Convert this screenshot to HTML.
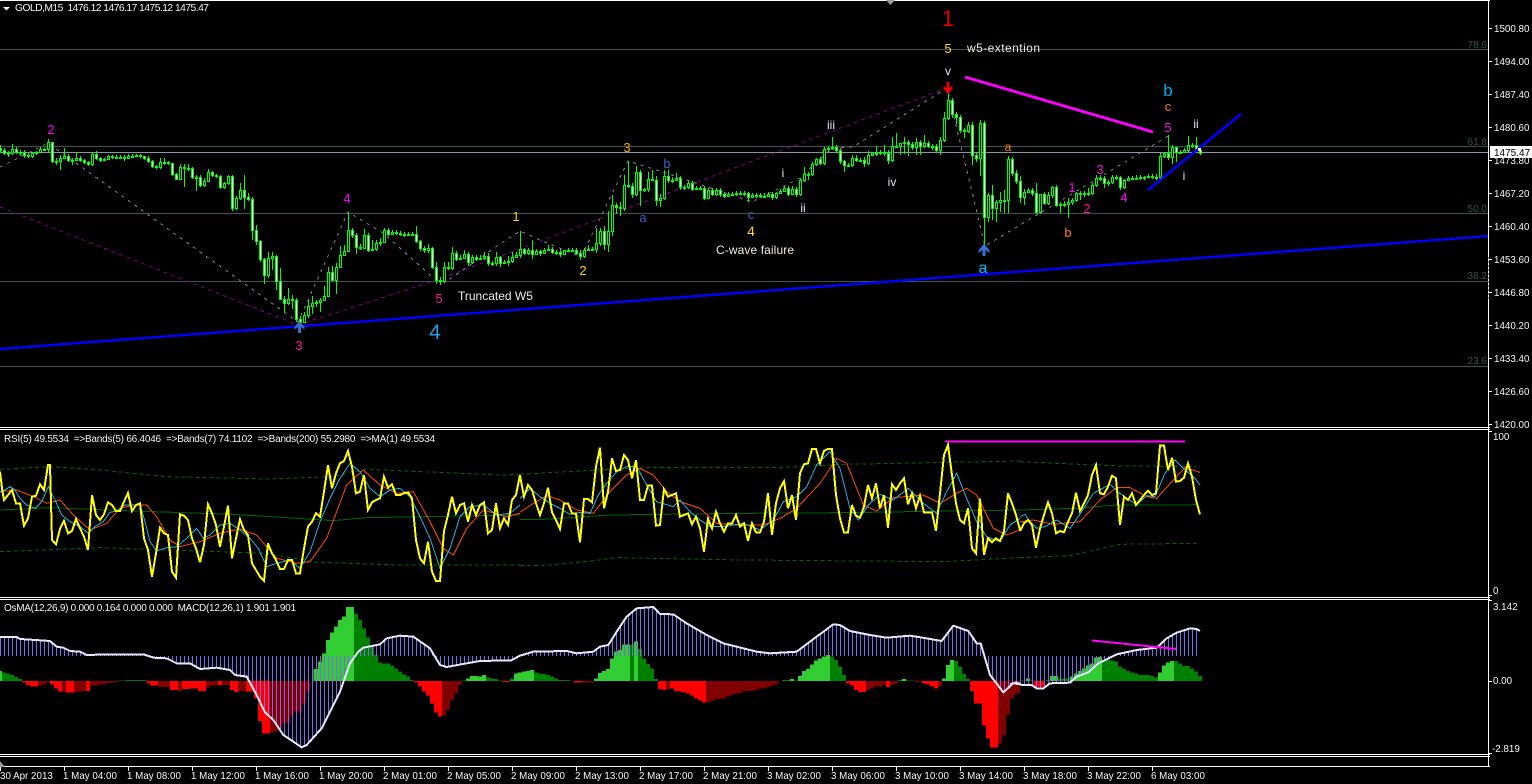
<!DOCTYPE html>
<html><head><meta charset="utf-8"><title>GOLD,M15</title>
<style>
html,body{margin:0;padding:0;background:#000;width:1532px;height:784px;overflow:hidden}
svg{display:block;position:absolute;left:0;top:0}
text{font-family:"Liberation Sans",sans-serif;white-space:pre}
.ax{fill:#f6f6f6;font-size:9.8px}
.fib{fill:#38504c;font-size:10px;text-anchor:end}
.lb{fill:#f3ebdc;font-size:12px}
.c{text-anchor:middle;font-size:12px}
.sh polyline,.sh line,.sh path{shape-rendering:crispEdges}
</style></head><body>
<svg width="1532" height="784" viewBox="0 0 1532 784" xmlns="http://www.w3.org/2000/svg">
<defs>
<pattern id="p0" patternUnits="userSpaceOnUse" x="0" y="0" width="12" height="12"><rect width="3" height="12" fill="#7B68EE"/></pattern>
<pattern id="p1" patternUnits="userSpaceOnUse" x="6" y="0" width="12" height="12"><rect width="3" height="12" fill="#7B68EE"/></pattern>
</defs>
<g class="sh" fill="none">
<g stroke="#3d5652" stroke-width="1">
<line x1="0" x2="1489" y1="49.5" y2="49.5"/><line x1="0" x2="1489" y1="146.5" y2="146.5"/><line x1="0" x2="1489" y1="213.5" y2="213.5"/><line x1="0" x2="1489" y1="281.5" y2="281.5"/><line x1="0" x2="1489" y1="366.5" y2="366.5"/>
</g>
<line x1="0" x2="1489" y1="152.5" y2="152.5" stroke="#8797a8"/>
<polyline stroke="#80858f" stroke-dasharray="3 5" points="0,167 48,143 298,322 348,212 383,233 437,281 447,281 500,244 520,231 540,240 581,257 628,161 666,173 752,202 800,178 832,148 853,147 947,88 985,246 1040,213 1170,135"/>
<polyline stroke="#800080" stroke-dasharray="4 4" points="0,207 298,325 437,280 947,88"/>
</g>
<!-- candles -->
<g transform="translate(.5,0)" fill="none" shape-rendering="crispEdges">
<path stroke="#00ff00" stroke-width="1" d="M0 145V153M4 148V155M8 151V157M12 144V155M16 147V154M20 150V156M24 150V158M28 153V158M32 152V158M36 151V155M40 147V153M44 148V151M48 139V152M52 142V163M56 158V165M60 155V170M64 148V158M68 154V162M72 158V165M76 153V161M80 156V162M84 159V164M88 161V166M92 152V166M96 151V160M100 157V162M104 158V161M108 155V160M112 155V159M116 155V158M120 155V159M124 155V161M128 154V159M132 154V157M136 154V157M140 154V158M144 156V160M148 156V163M152 160V168M156 165V169M160 158V169M164 158V165M168 161V165M172 163V176M176 173V180M180 164V180M184 164V187M188 164V171M192 167V179M196 175V191M200 175V187M204 178V187M208 169V175M212 171V177M216 174V178M220 175V189M224 182V189M228 175V185M232 175V211M236 196V210M240 183V200M244 175V209M248 193V201M252 197V240M256 225V245M260 240V262M264 258V284M268 252V278M272 252V270M276 255V290M280 268V300M284 296V313M288 288V305M292 295V309M296 298V322M300 316V325M304 312V323M308 300V318M312 296V314M316 300V307M320 298V312M324 286V300M328 267V296M332 266V281M336 263V294M340 246V268M344 245V256M348 212V252M352 228V238M356 233V254M360 244V250M364 229V249M368 233V252M372 240V251M376 240V251M380 238V246M384 228V243M388 228V236M392 230V235M396 230V235M400 231V236M404 232V237M408 232V236M412 232V236M416 226V243M420 240V251M424 246V253M428 244V253M432 247V269M436 262V284M440 277V285M444 262V283M448 262V270M452 247V270M456 251V261M460 255V260M464 250V259M468 252V266M472 255V264M476 255V261M480 255V260M484 252V260M488 253V266M492 261V266M496 252V266M500 256V267M504 260V264M508 256V266M512 252V263M516 252V257M520 231V258M524 248V255M528 248V255M532 240V259M536 249V255M540 250V256M544 248V252M548 245V251M552 247V254M556 250V255M560 249V257M564 250V255M568 248V252M572 248V252M576 248V255M580 250V260M584 248V258M588 245V251M592 247V251M596 228V253M600 228V246M604 226V250M608 211V252M612 195V236M616 203V214M620 202V216M624 175V211M628 161V188M632 183V198M636 166V196M640 170V206M644 188V192M648 172V192M652 170V181M656 176V206M660 194V207M664 170V200M668 170V183M672 177V183M676 173V180M680 176V190M684 185V190M688 180V189M692 181V191M696 186V190M700 186V190M704 186V200M708 188V199M712 188V196M716 188V196M720 188V197M724 192V198M728 192V197M732 192V196M736 191V196M740 191V195M744 191V196M748 192V202M752 193V198M756 193V198M760 193V198M764 193V198M768 192V197M772 192V200M776 192V199M780 189V193M784 186V191M788 186V196M792 186V195M796 187V197M800 178V196M804 167V182M808 172V180M812 162V176M816 158V166M820 157V165M824 147V165M828 146V152M832 137V150M836 145V153M840 148V164M844 160V172M848 163V167M852 155V167M856 155V162M860 158V162M864 157V167M868 151V165M872 152V156M876 146V156M880 150V155M884 145V156M888 150V164M892 137V162M896 133V148M900 144V155M904 137V154M908 140V156M912 142V150M916 138V155M920 140V155M924 135V148M928 141V148M932 144V150M936 144V152M940 137V155M944 112V142M948 90V120M952 98V118M956 112V124M960 115V133M964 128V138M968 122V133M972 122V165M976 153V162M980 120V176M984 121V245M988 193V222M992 185V220M996 200V222M1000 192V212M1004 190V213M1008 156V213M1012 157V176M1016 170V184M1020 176V203M1024 189V205M1028 188V193M1032 188V196M1036 183V214M1040 197V214M1044 192V205M1048 192V205M1052 186V198M1056 185V207M1060 202V213M1064 201V207M1068 198V218M1072 198V205M1076 192V202M1080 191V200M1084 191V197M1088 188V196M1092 183V195M1096 175V187M1100 175V181M1104 176V188M1108 180V186M1112 175V184M1116 175V180M1120 176V190M1124 179V189M1128 176V181M1132 176V180M1136 175V180M1140 175V180M1144 176V180M1148 174V178M1152 174V179M1156 174V180M1160 153V179M1164 152V158M1168 135V160M1172 145V164M1176 150V162M1180 150V154M1184 148V152M1188 136V152M1192 143V148M1196 137V152M1200 148V155"/>
<path stroke="#00ff00" stroke-width="3" d="M0 148V151M4 150V154M8 153V155M12 149V154M16 149V153M20 152V154M24 152V156M28 155V157M32 153V157M36 152V154M40 149V153M44 149V151M48 142V150M52 142V162M56 161V163M60 158V162M64 156V159M68 156V161M72 160V162M76 158V161M80 158V161M84 160V163M88 162V165M92 154V165M96 154V159M100 158V161M104 159V161M108 156V160M112 156V158M116 157V159M120 157V159M124 157V159M128 156V159M132 156V158M136 155V157M140 155V157M144 156V159M148 158V162M152 161V167M156 166V168M160 162V168M164 162V164M168 162V164M172 163V175M176 174V180M180 167V180M184 167V169M188 168V170M192 168V178M196 177V179M200 177V186M204 181V186M208 172V182M212 172V176M216 175V177M220 176V188M224 183V188M228 176V184M232 176V209M236 198V209M240 190V199M244 190V198M248 197V200M252 199V231M256 230V242M260 241V260M264 259V276M268 258V276M272 256V259M276 256V282M280 281V300M284 299V304M288 299V304M292 299V301M296 300V320M300 319V323M304 315V323M308 306V316M312 303V307M316 302V304M320 300V303M324 296V301M328 272V297M332 272V281M336 267V281M340 255V268M344 251V256M348 230V252M352 230V236M356 235V248M360 247V249M364 235V249M368 235V251M372 249V251M376 243V250M380 242V244M384 230V243M388 230V235M392 232V235M396 232V234M400 233V235M404 234V236M408 234V236M412 234V236M416 234V242M420 241V249M424 248V251M428 248V251M432 248V268M436 267V281M440 280V282M444 267V282M448 267V269M452 253V269M456 253V260M460 258V260M464 254V259M468 254V263M472 257V263M476 257V260M480 258V260M484 256V259M488 256V264M492 263V265M496 257V264M500 257V264M504 262V264M508 261V263M512 257V262M516 255V258M520 249V256M524 249V254M528 250V254M532 250V255M536 251V255M540 251V254M544 250V254M548 249V251M552 249V253M556 252V254M560 252V255M564 250V255M568 250V252M572 250V252M576 250V254M580 253V257M584 250V257M588 249V251M592 249V251M596 243V250M600 231V244M604 231V245M608 231V245M612 205V232M616 205V208M620 207V209M624 185V209M628 185V187M632 186V195M636 172V195M640 172V191M644 189V191M648 179V190M652 179V181M656 180V201M660 198V201M664 176V199M668 176V181M672 180V182M676 178V181M680 178V188M684 187V189M688 183V188M692 183V190M696 188V190M700 188V190M704 188V199M708 190V199M712 190V195M716 190V195M720 190V195M724 194V197M728 194V197M732 194V196M736 193V195M740 193V195M744 193V195M748 193V198M752 195V198M756 195V197M760 195V197M764 196V198M768 194V197M772 194V198M776 193V198M780 191V194M784 188V192M788 188V195M792 189V195M796 189V195M800 180V195M804 174V181M808 174V176M812 164V175M816 159V165M820 159V164M824 149V164M828 148V150M832 147V149M836 147V151M840 150V162M844 161V166M848 165V167M852 158V166M856 158V161M860 160V162M864 160V164M868 155V164M872 153V156M876 153V155M880 152V154M884 152V154M888 153V161M892 146V161M896 146V148M900 143V147M904 142V144M908 142V145M912 144V148M916 142V148M920 142V147M924 143V147M928 143V147M932 146V148M936 146V151M940 140V151M944 118V141M948 100V119M952 100V115M956 114V118M960 117V131M964 130V132M968 125V132M972 125V156M976 155V159M980 123V159M984 123V218M988 195V218M992 195V209M996 202V209M1000 200V203M1004 200V202M1008 159V201M1012 159V174M1016 173V182M1020 181V198M1024 192V198M1028 190V193M1032 190V194M1036 193V213M1040 194V213M1044 194V204M1048 195V204M1052 187V196M1056 187V206M1060 204V206M1064 204V206M1068 202V205M1072 200V203M1076 193V201M1080 193V195M1084 193V195M1088 193V195M1092 185V194M1096 178V186M1100 178V180M1104 178V184M1108 182V184M1112 177V183M1116 177V179M1120 177V188M1124 180V188M1128 178V181M1132 178V180M1136 178V180M1140 177V179M1144 177V179M1148 176V178M1152 176V178M1156 177V179M1160 156V178M1164 153V157M1168 153V158M1172 147V158M1176 147V153M1180 152V154M1184 150V153M1188 145V151M1192 145V147M1196 145V151M1200 150V154"/>
<path stroke="#fff" stroke-width="1" d="M0 149V150M4 151V153M16 150V152M24 153V155M52 143V161M68 157V160M80 159V160M84 161V162M88 163V164M96 155V158M100 159V160M144 157V158M148 159V161M152 162V166M172 164V174M176 175V179M192 169V177M200 178V185M212 173V175M220 177V187M232 177V208M244 191V197M248 198V199M252 200V230M256 231V241M260 242V259M264 260V275M276 257V281M280 282V299M284 300V303M296 301V319M300 320V322M332 273V280M352 231V235M356 236V247M368 236V250M388 231V234M416 235V241M420 242V248M424 249V250M432 249V267M436 268V280M456 254V259M468 255V262M476 258V259M488 257V263M500 258V263M524 250V253M532 251V254M540 252V253M552 250V252M560 253V254M576 251V253M580 254V256M604 232V244M616 206V207M632 187V194M640 173V190M656 181V200M668 177V180M680 179V187M692 184V189M704 189V198M712 191V194M720 191V194M724 195V196M748 194V197M772 195V197M788 189V194M796 190V194M820 160V163M836 148V150M840 151V161M844 162V165M856 159V160M864 161V163M888 154V160M908 143V144M912 145V147M920 143V146M928 144V146M936 147V150M952 101V114M956 115V117M960 118V130M972 126V155M976 156V158M984 124V217M992 196V208M1012 160V173M1016 174V181M1020 182V197M1032 191V193M1036 194V212M1044 195V203M1056 188V205M1104 179V183M1120 178V187M1168 154V157M1176 148V152M1196 146V150M1200 151V153"/>
<path stroke="#000" stroke-width="1" d="M12 150V153M32 154V156M40 150V152M48 143V149M60 159V161M64 157V158M76 159V160M92 155V164M108 157V159M128 157V158M160 163V167M180 168V179M204 182V185M208 173V181M224 184V187M228 177V183M236 199V208M240 191V198M268 259V275M272 257V258M288 300V303M304 316V322M308 307V315M312 304V306M320 301V302M324 297V300M328 273V296M336 268V280M340 256V267M344 252V255M348 231V251M364 236V248M376 244V249M384 231V242M392 233V234M428 249V250M444 268V281M452 254V268M464 255V258M472 258V262M484 257V258M496 258V263M512 258V261M516 256V257M520 250V255M528 251V253M536 252V254M544 251V253M564 251V254M584 251V256M596 244V249M600 232V243M608 232V244M612 206V231M624 186V208M636 173V194M648 180V189M660 199V200M664 177V198M676 179V180M688 184V187M708 191V198M716 191V194M728 195V196M752 196V197M768 195V196M776 194V197M780 192V193M784 189V191M792 190V194M800 181V194M804 175V180M812 165V174M816 160V164M824 150V163M852 159V165M868 156V163M872 154V155M892 147V160M900 144V146M916 143V147M924 144V146M940 141V150M944 119V140M948 101V118M968 126V131M980 124V158M988 196V217M996 203V208M1000 201V202M1008 160V200M1024 193V197M1028 191V192M1040 195V212M1048 196V203M1052 188V195M1068 203V204M1072 201V202M1076 194V200M1092 186V193M1096 179V185M1112 178V182M1124 181V187M1128 179V180M1160 157V177M1164 154V156M1172 148V157M1184 151V152M1188 146V150"/>
</g>
<g class="sh" fill="none">
<line x1="0" y1="349" x2="1489" y2="236" stroke="#0000ff" stroke-width="2.4"/>
<line x1="1148" y1="190" x2="1241" y2="114" stroke="#0000ff" stroke-width="2.6"/>
<line x1="965" y1="77" x2="1153" y2="132" stroke="#ff00ff" stroke-width="2.8"/>
</g>
<path d="M946.5 82h3v6l3-2v2.500l-4.500 6-4.500-6V86l3 2z" fill="#f00000"/>
<path d="M982.500 256h3v-6l4 3v-2.500l-5.500-7-5.500 7V253l4-3z" fill="#3a6ed0"/>
<path d="M298 333h3v-6l3.500 2.500v-2.500l-5-6-5 6v2.500l3.500-2.500z" fill="#3a6ed0"/>
<rect x="1198" y="148" width="3" height="3" fill="#fff"/>
<!-- RSI -->
<g class="sh" fill="none">
<line x1="945" x2="1185" y1="441.500" y2="441.500" stroke="#ff00ff" stroke-width="2"/>
<g transform="translate(0,425) scale(.33333)">
<polyline stroke="#006400" stroke-width="3" points="0,255 150,248 400,258 700,268 1000,287 1100,278 1560,270"/>
<polyline stroke="#006400" stroke-width="3" stroke-dasharray="12 9" points="0,133 150,125 300,135 500,155 800,162 1000,155 1100,133 1500,150 1560,148"/>
<polyline stroke="#006400" stroke-width="3" stroke-dasharray="12 9" points="0,380 300,368 800,385 950,412 1200,420 1560,420"/>
<polyline stroke="#ff4500" stroke-width="3" points="0,200 50,195 100,215 140,235 180,225 220,270 270,315 320,295 360,250 400,240 440,240 470,275 510,345 540,365 600,350 660,325 720,312 770,330 830,400 890,415 930,410 980,340 1040,180 1090,135 1140,180 1190,205 1240,200 1290,290 1330,370 1360,390 1400,310 1450,255 1520,275 1560,265"/>
<polyline stroke="#1fb0f0" stroke-width="3" points="0,200 15,195 30,185 45,195 60,220 80,240 105,250 125,230 145,185 165,225 185,270 210,290 240,305 265,325 285,305 310,290 330,262 350,258 375,240 400,240 420,238 435,290 450,350 470,378 500,368 530,365 560,340 590,310 610,340 630,330 660,300 690,295 720,315 750,340 775,370 800,425 830,415 870,405 900,430 930,380 960,290 990,220 1020,160 1050,115 1080,140 1110,190 1140,215 1170,195 1200,190 1230,215 1260,275 1290,340 1320,430 1350,370 1380,275 1410,245 1450,240 1490,270 1530,265 1560,240"/>
<polyline stroke="#ffff00" stroke-width="6" points="0,140 6,190 12,225 24,210 36,195 48,235 60,235 72,302 84,280 96,215 108,212 120,178 132,195 144,120 150,120 156,345 168,358 180,312 192,288 204,325 216,318 228,282 240,310 252,335 264,375 276,210 288,270 300,285 312,268 324,232 336,240 348,258 360,258 372,230 384,204 396,258 408,240 420,235 432,340 444,375 456,455 468,385 480,308 492,325 504,330 516,440 528,458 540,268 552,272 564,285 576,340 588,370 600,412 612,360 624,238 636,265 648,300 660,365 672,305 684,242 696,400 708,340 720,283 732,315 744,330 756,415 768,435 780,455 792,467 804,355 816,385 828,405 840,432 852,432 864,405 876,405 888,445 900,445 912,370 924,305 936,290 948,265 960,275 972,200 984,120 996,190 1008,145 1020,115 1032,108 1044,78 1056,125 1068,205 1080,200 1092,150 1104,255 1116,232 1128,225 1140,220 1152,155 1164,188 1176,178 1188,210 1200,210 1212,205 1224,202 1236,220 1248,345 1260,400 1272,415 1284,350 1296,440 1308,468 1320,468 1332,318 1344,270 1356,215 1368,265 1380,240 1392,235 1404,290 1416,240 1428,270 1440,240 1452,232 1464,325 1476,315 1488,235 1500,310 1512,280 1524,300 1536,225 1548,210 1560,150"/>
</g>
<g transform="translate(510,425) scale(.33333)">
<polyline stroke="#006400" stroke-width="3" points="30,283 100,283 300,270 700,265 1000,263 1530,255"/>
<polyline stroke="#006400" stroke-width="3" stroke-dasharray="12 9" points="30,148 170,140 400,128 800,128 1000,118 1530,108"/>
<polyline stroke="#006400" stroke-width="3" stroke-dasharray="12 9" points="30,422 100,422 240,408 320,398 700,405 1300,410 1530,398"/>
<polyline stroke="#ff4500" stroke-width="3" points="30,262 70,235 110,212 150,225 200,255 250,265 300,200 350,150 390,130 430,150 470,200 510,230 570,250 620,295 680,300 760,300 810,280 860,250 930,175 980,100 1010,115 1060,240 1100,258 1150,218 1240,210 1290,235 1340,205 1370,190 1400,210 1450,310 1490,330 1530,315"/>
<polyline stroke="#1fb0f0" stroke-width="3" points="30,220 60,190 90,215 120,235 150,250 180,268 210,262 240,265 265,210 290,175 320,140 350,125 380,125 410,180 440,230 490,245 510,225 540,260 570,285 600,305 640,305 700,295 750,315 790,285 820,230 860,215 890,185 920,120 960,80 990,130 1020,250 1045,285 1075,240 1110,208 1150,225 1195,190 1240,235 1280,265 1310,200 1340,145 1370,220 1400,290 1430,335 1470,350 1500,300 1530,280"/>
<polyline stroke="#ffff00" stroke-width="6" points="30,152 42,215 54,180 66,195 78,235 90,270 102,235 114,188 126,262 138,285 150,312 162,235 174,235 186,265 198,265 210,352 222,222 234,222 246,232 258,125 270,68 282,250 294,200 306,100 318,138 330,135 342,90 354,105 366,160 378,105 390,225 402,225 414,182 426,182 438,302 450,300 462,192 474,215 486,210 498,205 510,275 522,270 534,265 546,298 558,275 570,310 582,380 594,282 606,310 618,260 630,295 642,320 654,295 666,295 678,270 690,305 702,295 714,348 726,295 738,322 750,322 762,290 774,205 786,330 798,235 810,190 822,168 834,250 846,210 858,285 870,145 882,118 894,115 906,72 918,72 930,115 942,78 954,72 966,72 978,210 990,280 1002,322 1014,322 1026,240 1038,272 1050,278 1062,245 1074,180 1086,220 1098,175 1110,250 1122,210 1134,308 1146,178 1158,195 1170,175 1182,160 1194,238 1206,205 1218,250 1230,212 1242,262 1254,262 1266,262 1278,318 1290,205 1302,90 1314,60 1326,150 1338,235 1350,285 1362,295 1374,250 1386,370 1398,385 1410,220 1422,390 1434,340 1446,352 1458,340 1470,348 1482,320 1494,205 1506,235 1518,270 1530,315"/>
</g>
<g transform="translate(1010,425) scale(.33333)">
<polyline stroke="#006400" stroke-width="3" points="30,255 200,250 320,240 540,240 560,238"/>
<polyline stroke="#006400" stroke-width="3" stroke-dasharray="12 9" points="30,110 300,122 560,125"/>
<polyline stroke="#006400" stroke-width="3" stroke-dasharray="12 9" points="30,398 180,392 330,358 560,355"/>
<polyline stroke="#ff4500" stroke-width="3" points="30,290 70,285 130,298 210,290 270,225 320,188 360,188 410,215 440,220 490,165 525,128 570,142"/>
<polyline stroke="#1fb0f0" stroke-width="3" points="30,275 45,268 60,290 80,310 105,305 140,285 180,310 215,260 250,205 300,178 330,205 380,240 410,212 435,215 465,145 495,105 520,130 555,160 570,180"/>
<polyline stroke="#ffff00" stroke-width="6" points="30,318 42,295 54,285 66,300 78,368 90,310 102,270 114,232 126,265 138,325 150,318 162,322 174,290 186,265 198,203 210,258 222,235 234,210 246,150 258,120 270,205 282,208 294,185 306,152 318,160 330,300 342,215 354,225 366,205 378,240 390,225 402,210 414,197 426,210 438,205 450,62 462,62 474,135 486,98 498,170 510,168 522,158 534,115 546,155 558,225 570,268"/>
</g>
</g>
<!-- MACD -->
<g shape-rendering="crispEdges">
<g transform="translate(0,595) scale(.33333)">
<path fill="#32cd32" d="M0 258V228H6V258Z M378 258V256H440V258Z M940 258V222H954V200H966V175H978V135H990V112H1002V95H1014V75H1026V65H1038V36H1062V258Z M1398 258V250H1410V243H1434V245H1446V240H1458V258Z M1542 258V235H1560V258Z"/>
<path fill="#008000" d="M6 258V232H18V236H30V240H42V246H54V252H66V258Z M355 258V257H378V258Z M1062 258V55H1074V75H1086V100H1098V128H1110V155H1122V180H1134V202H1146V205H1170V212H1182V220H1194V230H1206V238H1218V245H1230V255H1242V258Z M1386 258V257H1398V258Z M1458 258V247H1470V250H1482V252H1494V256H1506V258Z M1530 258V250H1542V258Z"/>
<path fill="#ff0000" d="M66 258V263H78V270H90V274H114V258Z M150 258V268H162V280H174V290H186V258Z M198 258V293H222V258Z M258 258V288H270V258Z M440 258V264H450V272H474V258Z M510 258V285H534V258Z M546 258V282H570V280H594V288H618V258Z M654 258V270H666V258Z M690 258V285H702V291H714V258Z M738 258V290H762V310H774V378H786V415H810V258Z M1242 258V263H1254V275H1266V290H1278V302H1290V325H1302V352H1314V365H1326V258Z M1506 258V261H1530V258Z"/>
<path fill="#800000" d="M114 258V272H126V268H138V263H150V258Z M186 258V291H198V258Z M222 258V293H234V290H246V288H258V258Z M270 258V272H294V268H318V264H340V261H355V258Z M474 258V276H510V258Z M534 258V288H546V258Z M618 258V278H630V272H654V258Z M666 258V270H690V258Z M714 258V288H738V258Z M810 258V412H822V408H834V400H846V385H858V382H870V360H882V350H906V325H918V290H930V258Z M1326 258V362H1338V345H1350V315H1362V295H1374V270H1386V258Z"/>
<polygon fill="url(#p0)" points="0,183 0,126 50,126 60,132 150,138 170,155 190,158 210,168 240,170 260,180 330,178 430,178 460,188 500,190 530,205 570,205 600,222 650,218 690,225 705,240 740,245 770,300 795,352 820,375 850,420 880,440 905,457 920,450 965,400 990,350 1020,290 1050,205 1075,170 1090,158 1140,148 1160,130 1200,122 1240,125 1290,160 1320,210 1340,216 1400,205 1440,198 1530,196 1530,183"/>
</g>
<g transform="translate(510,595) scale(.33333)">
<path fill="#32cd32" d="M0 258V256H12V250H24V232H36V230H48V228H60V225H72V258Z M156 258V256H180V258Z M252 258V250H264V234H276V228H288V222H300V190H312V170H324V165H336V148H360V258Z M372 258V140H384V258Z M840 258V252H852V258Z M864 258V243H876V228H888V222H900V208H912V196H924V190H936V185H948V180H960V258Z M1176 258V252H1188V258Z M1296 258V250H1308V210H1320V195H1332V258Z"/>
<path fill="#008000" d="M72 258V232H84V235H96V237H108V240H120V245H132V250H144V255H156V258Z M360 258V150H372V258Z M384 258V162H396V190H408V207H420V220H432V252H444V258Z M816 258V255H840V258Z M852 258V257H864V258Z M960 258V185H972V195H984V215H996V240H1008V258Z M1164 258V255H1176V258Z M1188 258V256H1212V258Z M1332 258V198H1344V215H1356V237H1368V252H1380V258Z"/>
<path fill="#ff0000" d="M190 258V262H216V258Z M444 258V282H456V285H468V258Z M480 258V280H492V288H504V290H516V293H528V296H540V302H552V310H564V316H576V323H588V258Z M1008 258V265H1020V272H1032V285H1044V291H1068V258Z M1128 258V276H1140V258Z M1212 258V260H1236V265H1248V268H1260V275H1272V280H1284V258Z M1380 258V288H1392V325H1416V392H1428V430H1440V458H1464V258Z"/>
<path fill="#800000" d="M216 258V262H250V258Z M468 258V282H480V258Z M588 258V323H600V318H612V314H624V310H648V305H660V300H672V295H696V288H732V285H744V280H768V276H780V272H792V268H804V260H816V258Z M1068 258V285H1080V280H1092V275H1116V268H1128V258Z M1140 258V270H1152V265H1164V258Z M1284 258V275H1296V258Z M1464 258V445H1476V420H1488V358H1500V310H1512V295H1530V258Z"/>
<polygon fill="url(#p1)" points="0,183 0,198 30,182 70,170 170,168 200,175 250,170 270,155 295,150 320,110 350,65 380,40 430,36 450,57 490,58 530,85 590,120 640,145 740,170 780,175 860,170 920,125 970,88 990,90 1020,108 1080,120 1130,128 1200,122 1250,130 1295,138 1330,92 1375,108 1400,145 1412,145 1440,240 1480,292 1510,265 1530,268 1530,183"/>
</g>
<g transform="translate(1010,595) scale(.33333)">
<path fill="#32cd32" d="M48 258V250H60V258Z M120 258V243H144V258Z M180 258V245H192V235H204V228H216V220H228V212H240V205H252V188H264V186H276V258Z M444 258V232H456V212H468V203H480V198H492V258Z"/>
<path fill="#008000" d="M36 258V257H48V258Z M60 258V256H72V258Z M108 258V255H120V258Z M144 258V250H180V258Z M276 258V195H300V197H312V200H324V215H336V222H348V228H360V232H372V236H384V240H420V243H432V247H444V258Z M492 258V198H504V205H516V213H540V220H552V230H564V243H576V258Z"/>
<path fill="#ff0000" d="M72 258V276H102V258Z"/>
<path fill="#800000" d="M0 258V308H12V258Z"/>
<polygon fill="url(#p1)" points="0,183 0,268 20,262 35,270 65,270 80,280 100,280 120,265 180,263 200,245 235,232 265,205 320,178 380,165 440,158 470,130 500,113 540,100 560,102 570,108 570,183"/>
</g>
</g>
<g fill="none" stroke="#e8e6fa" stroke-width="6" class="sh">
<polyline transform="translate(0,595) scale(.33333)" points="0,126 50,126 60,132 150,138 170,155 190,158 210,168 240,170 260,180 330,178 430,178 460,188 500,190 530,205 570,205 600,222 650,218 690,225 705,240 740,245 770,300 795,352 820,375 850,420 880,440 905,457 920,450 965,400 990,350 1020,290 1050,205 1075,170 1090,158 1140,148 1160,130 1200,122 1240,125 1290,160 1320,210 1340,216 1400,205 1440,198 1530,196"/>
<polyline transform="translate(510,595) scale(.33333)" points="0,198 30,182 70,170 170,168 200,175 250,170 270,155 295,150 320,110 350,65 380,40 430,36 450,57 490,58 530,85 590,120 640,145 740,170 780,175 860,170 920,125 970,88 990,90 1020,108 1080,120 1130,128 1200,122 1250,130 1295,138 1330,92 1375,108 1400,145 1412,145 1440,240 1480,292 1510,265 1530,268"/>
<polyline transform="translate(1010,595) scale(.33333)" points="0,268 20,262 35,270 65,270 80,280 100,280 120,265 180,263 200,245 235,232 265,205 320,178 380,165 440,158 470,130 500,113 540,100 560,102 570,108"/>
</g>
<line x1="1092" y1="640.500" x2="1176" y2="649" stroke="#ff00ff" stroke-width="2" shape-rendering="crispEdges"/>
<!-- frame -->
<g fill="#fff" shape-rendering="crispEdges">
<rect x="0" y="0" width="1490" height="1"/>
<rect x="0" y="427" width="1490" height="1"/>
<rect x="0" y="429" width="1490" height="1"/>
<rect x="0" y="597" width="1490" height="1"/>
<rect x="0" y="599" width="1490" height="1"/>
<rect x="0" y="754" width="1490" height="1"/>
<rect x="0" y="756" width="1490" height="1"/>
<rect x="0" y="766" width="1490" height="1"/>
<rect x="1488" y="0" width="1" height="767"/>
<path d="M1489 28h3v1h-3z M1489 61h3v1h-3z M1489 94h3v1h-3z M1489 127h3v1h-3z M1489 160h3v1h-3z M1489 193h3v1h-3z M1489 226h3v1h-3z M1489 259h3v1h-3z M1489 292h3v1h-3z M1489 325h3v1h-3z M1489 358h3v1h-3z M1489 391h3v1h-3z M1489 424h3v1h-3z M1489 431h3v1h-3z M1489 595h3v1h-3z M1489 600h3v1h-3z M1489 681h3v1h-3z M1489 753h3v1h-3z"/>
<path d="M0 767h1v4h-1z M64 767h1v4h-1z M128 767h1v4h-1z M192 767h1v4h-1z M256 767h1v4h-1z M320 767h1v4h-1z M384 767h1v4h-1z M448 767h1v4h-1z M512 767h1v4h-1z M576 767h1v4h-1z M640 767h1v4h-1z M704 767h1v4h-1z M768 767h1v4h-1z M832 767h1v4h-1z M896 767h1v4h-1z M960 767h1v4h-1z M1024 767h1v4h-1z M1088 767h1v4h-1z M1152 767h1v4h-1z"/>
</g>
<line x1="1488.500" y1="257" x2="1488.500" y2="300" stroke="#888" stroke-dasharray="2 2"/>
<path d="M3 7h7l-3.500 3.500z" fill="#fff"/>
<path d="M886 0h9l-4.500 5z" fill="#9a9a9a"/>
<path d="M0 761l5 6h-5z" fill="#9a9a9a"/>
<text x="15" y="11" fill="#f2f2f2" font-size="10.300" textLength="194" lengthAdjust="spacing" xml:space="preserve">GOLD,M15  1476.12 1476.17 1475.12 1475.47</text>
<text x="4" y="442" fill="#f2f2f2" font-size="10" textLength="431" lengthAdjust="spacing" xml:space="preserve">RSI(5) 49.5534  =&gt;Bands(5) 66.4046  =&gt;Bands(7) 74.1102  =&gt;Bands(200) 55.2980  =&gt;MA(1) 49.5534</text>
<text x="4" y="611" fill="#f2f2f2" font-size="10" textLength="292" lengthAdjust="spacing" xml:space="preserve">OsMA(12,26,9) 0.000 0.164 0.000 0.000  MACD(12,26,1) 1.901 1.901</text>
<text class="fib" x="1487" y="48">78.6</text><text class="fib" x="1487" y="145">61.8</text><text class="fib" x="1487" y="212">50.0</text><text class="fib" x="1487" y="279">38.2</text><text class="fib" x="1487" y="364">23.6</text>
<g class="ax">
<text x="1494" y="32">1500.80</text><text x="1494" y="65">1494.00</text><text x="1494" y="98">1487.40</text><text x="1494" y="131">1480.60</text><text x="1494" y="164">1473.80</text><text x="1494" y="197">1467.20</text><text x="1494" y="230">1460.40</text><text x="1494" y="263">1453.60</text><text x="1494" y="296">1446.80</text><text x="1494" y="329">1440.20</text><text x="1494" y="362">1433.40</text><text x="1494" y="395">1426.60</text><text x="1494" y="428">1420.00</text>
<text x="1493" y="440">100</text><text x="1493" y="594">0</text>
<text x="1493" y="610">3.142</text><text x="1493" y="684">0.00</text><text x="1492" y="752">-2.819</text>
</g>
<rect x="1490" y="146" width="42" height="12" fill="#fff" shape-rendering="crispEdges"/>
<text x="1494" y="156" fill="#000" font-size="10">1475.47</text>
<g class="ax">
<text x="0" y="779">30 Apr 2013</text><text x="63" y="779">1 May 04:00</text><text x="127" y="779">1 May 08:00</text><text x="191" y="779">1 May 12:00</text><text x="255" y="779">1 May 16:00</text><text x="319" y="779">1 May 20:00</text><text x="383" y="779">2 May 01:00</text><text x="447" y="779">2 May 05:00</text><text x="511" y="779">2 May 09:00</text><text x="575" y="779">2 May 13:00</text><text x="639" y="779">2 May 17:00</text><text x="703" y="779">2 May 21:00</text><text x="767" y="779">3 May 02:00</text><text x="831" y="779">3 May 06:00</text><text x="895" y="779">3 May 10:00</text><text x="959" y="779">3 May 14:00</text><text x="1023" y="779">3 May 18:00</text><text x="1087" y="779">3 May 22:00</text><text x="1151" y="779">6 May 03:00</text>
</g>
<text class="c" x="948" y="26" fill="#e40000" style="font-size:22px">1</text>
<text class="c" x="948" y="53" fill="#ffd700" style="font-size:13px">5</text>
<text class="lb" x="967" y="52" textLength="73" lengthAdjust="spacing">w5-extention</text>
<text class="c" x="948" y="75" fill="#dfe6f2">v</text>
<text class="c" x="51" y="134" fill="#ff00ff" style="font-size:13px">2</text>
<text class="c" x="347" y="203" fill="#ff00ff" style="font-size:13px">4</text>
<text class="c" x="299" y="350" fill="#ff1493" style="font-size:13px">3</text>
<text class="c" x="439" y="303" fill="#ff1493" style="font-size:13px">5</text>
<text class="lb" x="458" y="300">Truncated W5</text>
<text class="c" x="435" y="339" fill="#1e9fe8" style="font-size:21px">4</text>
<text class="c" x="516" y="221" fill="#ffd700" style="font-size:13px">1</text>
<text class="c" x="583" y="275" fill="#ffd700" style="font-size:13px">2</text>
<text class="c" x="627" y="152" fill="#ffa500" style="font-size:13px">3</text>
<text class="c" x="643" y="222" fill="#3a62c8" style="font-size:13px">a</text>
<text class="c" x="667" y="168" fill="#3a62c8" style="font-size:13px">b</text>
<text class="c" x="751" y="219" fill="#3a62c8" style="font-size:13px">c</text>
<text class="c" x="751" y="236" fill="#ffd700" style="font-size:14px">4</text>
<text class="lb" x="716" y="254" textLength="78" lengthAdjust="spacing">C-wave failure</text>
<text class="c" x="783" y="177" fill="#dfe6f2">i</text>
<text class="c" x="803" y="212" fill="#dfe6f2">ii</text>
<text class="c" x="831" y="129" fill="#dfe6f2">iii</text>
<text class="c" x="892" y="186" fill="#dfe6f2">iv</text>
<text class="c" x="983" y="273" fill="#00bfff" style="font-size:16px">a</text>
<text class="c" x="1008" y="151" fill="#ff8000" style="font-size:12px">a</text>
<text class="c" x="1068" y="237" fill="#ff8000" style="font-size:13px">b</text>
<text class="c" x="1072" y="192" fill="#ff00ff" style="font-size:13px">1</text>
<text class="c" x="1087" y="213" fill="#ff1493" style="font-size:13px">2</text>
<text class="c" x="1100" y="174" fill="#e020c0" style="font-size:13px">3</text>
<text class="c" x="1124" y="202" fill="#ff00ff" style="font-size:13px">4</text>
<text class="c" x="1168" y="132" fill="#e020e0" style="font-size:13px">5</text>
<text class="c" x="1168" y="111" fill="#ff8000" style="font-size:13px">c</text>
<text class="c" x="1168" y="96" fill="#00a8f0" style="font-size:17px">b</text>
<text class="c" x="1196" y="128" fill="#dfe6f2">ii</text>
<text class="c" x="1184" y="180" fill="#dfe6f2">i</text>
</svg>
</body></html>
